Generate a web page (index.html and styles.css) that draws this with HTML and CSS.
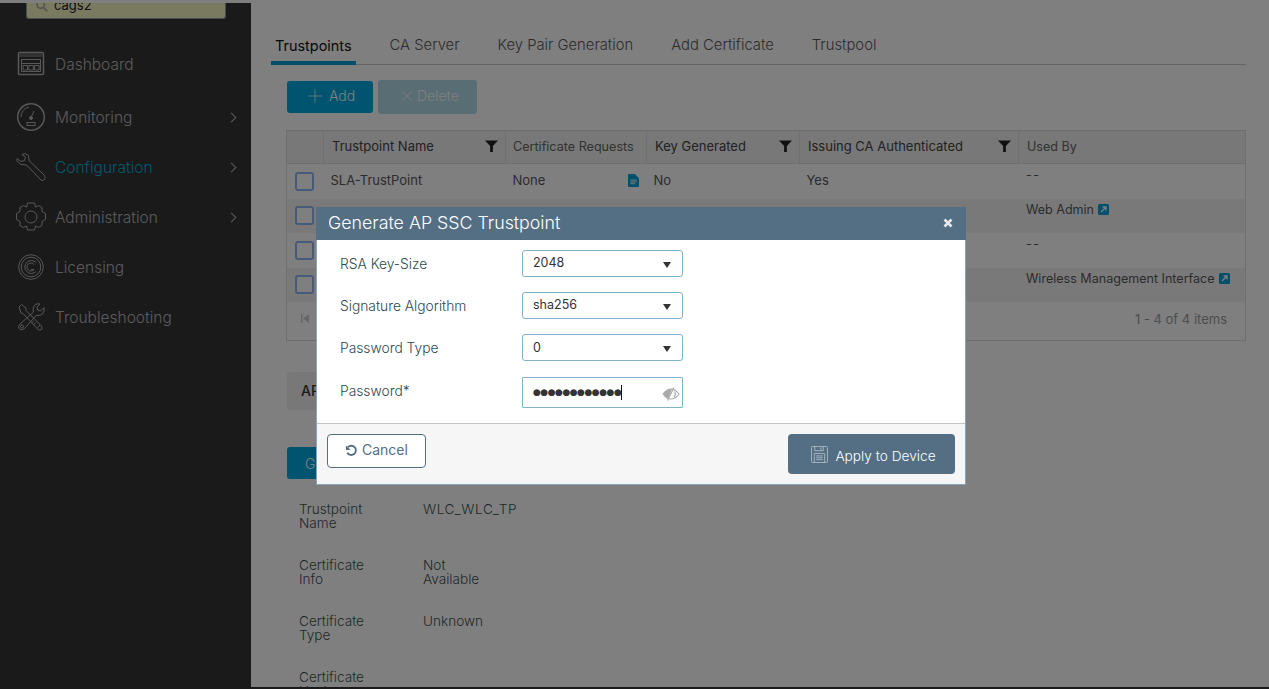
FILE: index.html
```html
<!DOCTYPE html>
<html lang="en">
<head>
  <meta charset="UTF-8" />
  <title>Trustpoints</title>
  <link rel="stylesheet" href="styles.css">
</head>
<body>
  <div class="topline"></div>
  <div class="page">
    <aside class="sidebar">
      <div class="search">
        <svg class="search-icon" viewBox="0 0 14 14"><circle cx="5.500" cy="5.500" r="4.200"/><path d="M8.500 8.500 13 13"/></svg>
        <span>cags2</span>
      </div>
      <nav class="menu">
        <a class="menu-item">
          <svg class="menu-icon" viewBox="0 0 30 30"><rect class="frame" x="2.500" y="3.500" width="25" height="22" rx="1"/><path class="band" d="M3 4h24v4H3z"/><path d="M5.500 10.500h19v4h-19zM5.500 14.500h19v8h-19zM7 16.500h4.500v4.500H7zM12.800 16.500h4.500v4.500h-4.500zM18.600 16.500h4.500v4.500h-4.500z"/></svg>
          <span>Dashboard</span>
        </a>
        <a class="menu-item has-sub">
          <svg class="menu-icon" viewBox="0 0 30 30"><circle class="frame" cx="15" cy="15" r="13.300"/><path d="M5 15A10 10 0 0 1 13 5M15 15.500 18 9"/><circle class="hub" cx="15" cy="16" r="1.500"/><rect x="11" y="20.500" width="8" height="3"/></svg>
          <span>Monitoring</span>
        </a>
        <a class="menu-item has-sub active">
          <svg class="menu-icon" viewBox="0 0 30 30"><path d="M9 1.500 12.500 3.500 13 8.500 28.500 23.500Q30 25.500 28.500 27.500 27 29.500 25 28L10.500 13 5 12.500 1 9 1 6.500 5 9.500 8.500 8.500 9.500 5 6 2.500Z"/></svg>
          <span>Configuration</span>
        </a>
        <a class="menu-item has-sub">
          <svg class="menu-icon" viewBox="0 0 30 30"><path d="M11.500 1h7l1 4 3-1.500 3.500 2 0 4 3.500 2 0 6-3.500 2 0 4-3.500 2-3-1.500-1 4h-7l-1-4-3 1.500-3.500-2 0-4-3.500-2 0-6 3.500-2 0-4 3.500-2 3 1.500z"/><circle cx="15" cy="15" r="6"/></svg>
          <span>Administration</span>
        </a>
        <a class="menu-item">
          <svg class="menu-icon" viewBox="0 0 30 30"><circle cx="15" cy="15" r="12.300"/><circle cx="15" cy="15" r="9.800"/><path d="M20 10.500A6.500 6.500 0 1 0 20 19.500M18 12.500A4 4 0 1 0 18 17.500H15"/></svg>
          <span>Licensing</span>
        </a>
        <a class="menu-item">
          <svg class="menu-icon" viewBox="0 0 30 30"><path d="M3 5 5.500 2.500 10 6 10 8.500 25 23.500Q27 26 25.500 27.500 23.500 29 21.500 27L7 11.500 5 11ZM21.500 25.500l2.500-2.500M18 18.500l-2.500 2.500M20 20.500l-2.500 2.500"/><path d="M28 5.500 24.500 9 21.500 8 21 5 24 2Q19.500 1 17.500 5 16.500 8 17.500 10L3.500 22.500Q1.500 25 3.500 27 6 29 8.500 26.500L20 13.500Q24 14 26.500 12 29 9 28 5.500Z"/><circle cx="6" cy="24.500" r="1.500"/></svg>
          <span>Troubleshooting</span>
        </a>
      </nav>
    </aside>

    <main class="content">
      <div class="tabs">
        <a class="tab active">Trustpoints</a>
        <a class="tab">CA Server</a>
        <a class="tab">Key Pair Generation</a>
        <a class="tab">Add Certificate</a>
        <a class="tab">Trustpool</a>
      </div>

      <div class="toolbar">
        <button class="btn btn-add"><svg class="btn-sign" viewBox="0 0 14 14"><path d="M7 0v14M0 7h14"/></svg>Add</button>
        <button class="btn btn-delete"><svg class="btn-sign" viewBox="0 0 14 14"><path d="M1.500 1.500l11 11M12.500 1.500l-11 11"/></svg>Delete</button>
      </div>

      <div class="grid">
        <div class="grid-row grid-head">
          <div class="cell"></div>
          <div class="cell filter">Trustpoint Name <svg class="funnel" viewBox="0 0 14 14"><path d="M0 1h14L8.500 7v6.500h-3V7z"/></svg></div>
          <div class="cell plain">Certificate Requests</div>
          <div class="cell filter">Key Generated <svg class="funnel" viewBox="0 0 14 14"><path d="M0 1h14L8.500 7v6.500h-3V7z"/></svg></div>
          <div class="cell filter">Issuing CA Authenticated <svg class="funnel" viewBox="0 0 14 14"><path d="M0 1h14L8.500 7v6.500h-3V7z"/></svg></div>
          <div class="cell plain">Used By</div>
        </div>
        <div class="grid-row">
          <div class="cell check-cell"><span class="check"></span></div>
          <div class="cell">SLA-TrustPoint</div>
          <div class="cell doc-cell">None <svg class="doc" viewBox="0 0 12 14"><path d="M0 1a1 1 0 0 1 1-1h6.500L12 4.500V13a1 1 0 0 1-1 1H1a1 1 0 0 1-1-1z"/><path class="doc-lines" d="M2.500 6.500h7M2.500 8.500h7M2.500 10.500h5"/></svg></div>
          <div class="cell">No</div>
          <div class="cell">Yes</div>
          <div class="cell top"><span class="dash">--</span></div>
        </div>
        <div class="grid-row alt">
          <div class="cell check-cell"><span class="check"></span></div>
          <div class="cell"></div>
          <div class="cell"></div>
          <div class="cell"></div>
          <div class="cell"></div>
          <div class="cell top">Web Admin <svg class="ext" viewBox="0 0 11 11"><rect width="11" height="11" rx="1.500"/><path class="ext-arrow" d="M3 8 7.500 3.500M4.500 3h3.500v3.500"/></svg></div>
        </div>
        <div class="grid-row">
          <div class="cell check-cell"><span class="check"></span></div>
          <div class="cell"></div>
          <div class="cell"></div>
          <div class="cell"></div>
          <div class="cell"></div>
          <div class="cell top"><span class="dash">--</span></div>
        </div>
        <div class="grid-row alt">
          <div class="cell check-cell"><span class="check"></span></div>
          <div class="cell"></div>
          <div class="cell"></div>
          <div class="cell"></div>
          <div class="cell"></div>
          <div class="cell top">Wireless Management Interface <svg class="ext" viewBox="0 0 11 11"><rect width="11" height="11" rx="1.500"/><path class="ext-arrow" d="M3 8 7.500 3.500M4.500 3h3.500v3.500"/></svg></div>
        </div>
        <div class="grid-foot">
          <svg class="pager-first" viewBox="0 0 8 9"><path d="M0 0h1.500v9H0zM8 0v9L2 4.500z"/></svg>
          <span class="pager-info">1 - 4 of 4 items</span>
        </div>
      </div>

      <div class="panel-title">AP</div>
      <button class="btn btn-gen">Generate</button>

      <dl class="details">
        <dt>Trustpoint Name</dt><dd class="tp-name">WLC_WLC_TP</dd>
        <dt>Certificate Info</dt><dd>Not Available</dd>
        <dt>Certificate Type</dt><dd>Unknown</dd>
        <dt>Certificate Hash</dt><dd></dd>
      </dl>
    </main>
  </div>
  <div class="bottomline"></div>

  <div class="overlay"></div>

  <div class="modal">
    <div class="modal-head">
      <span>Generate AP SSC Trustpoint</span>
      <svg class="modal-close" viewBox="0 0 10 10"><path d="M1.500 1.500l7 7M8.500 1.500l-7 7"/></svg>
    </div>
    <div class="modal-body">
      <div class="form-row">
        <label>RSA Key-Size</label>
        <div class="select">2048<i class="caret"></i></div>
      </div>
      <div class="form-row">
        <label>Signature Algorithm</label>
        <div class="select">sha256<i class="caret"></i></div>
      </div>
      <div class="form-row">
        <label>Password Type</label>
        <div class="select">0<i class="caret"></i></div>
      </div>
      <div class="form-row">
        <label>Password*</label>
        <div class="select password">
          <span class="dots">●●●●●●●●●●●●</span><i class="cursor"></i>
          <svg class="eye" viewBox="0 0 18 14"><path d="M1 7C4 3 7 2 9 2S14 3 17 7C14 11 11 12 9 12S4 11 1 7Z"/><path d="M5.500 13.500 12 .5M12.500 4.500Q14.500 7 12 10"/><path class="eye-fill" d="M1 7C4 3 7 2 10 2L6.500 11.500C4.500 11 3 9.500 1 7Z"/></svg>
        </div>
      </div>
    </div>
    <div class="modal-foot">
      <button class="btn-cancel">
        <svg class="undo" viewBox="0 0 14 14"><path d="M3 3.500A5 5 0 1 1 2.500 9.500"/><path class="undo-fill" d="M1 1.500v5h5z"/></svg>
        Cancel
      </button>
      <button class="btn-apply">
        <svg class="save" viewBox="0 0 18 18"><path d="M.5 1.500a1 1 0 0 1 1-1h15a1 1 0 0 1 1 1v15a1 1 0 0 1-1 1h-15a1 1 0 0 1-1-1zM4 .5V5h9V.5M10.500 1.500v2.500M3.500 17.500V8h11v9.500M5.500 10.500h7M5.500 12.500h7M5.500 14.500h7"/></svg>
        Apply to Device
      </button>
    </div>
  </div>
</body>
</html>
```

FILE: styles.css
```css
* {
  box-sizing: border-box;
}

html, body {
  height: 100%;
}

body {
  margin: 0;
  height: 689px;
  overflow: hidden;
  display: flex;
  flex-direction: column;
  font-family: Inter, "Liberation Sans", sans-serif;
  font-weight: 300;
  color: #3a4a4f;
  background: #fff;
}

.topline {
  height: 3px;
  background: #fff;
}

.bottomline {
  height: 2px;
  background: #343434;
}

.page {
  flex: 1;
  display: flex;
  min-height: 0;
  border-left: 1px solid #343434;
}

/* sidebar */
.sidebar {
  width: 250px;
  background: #343434;
  flex-shrink: 0;
}

.search {
  width: 200px;
  height: 16px;
  margin-left: 25px;
  padding: 0 0 7px 9px;
  display: flex;
  align-items: flex-end;
  gap: 6px;
  background: #f4f4c0;
  border: 1px solid #8e9aa3;
  border-top: none;
  border-radius: 0 0 3px 3px;
  font-size: 13px;
  font-weight: 400;
  color: #222;
  line-height: 12px;
  overflow: hidden;
}

.search-icon {
  width: 12px;
  height: 12px;
  margin-bottom: -1px;
  fill: none;
  stroke: #aaa;
  stroke-width: 2;
}

.menu {
  margin-top: 20px;
  display: flex;
  flex-direction: column;
}

.menu-item {
  position: relative;
  height: 50px;
  display: flex;
  align-items: center;
  font-size: 15.500px;
  font-weight: 300;
  color: #b4b4b4;
}

.menu-item:first-child {
  margin-bottom: 3px;
}

.menu-item span {
  position: absolute;
  left: 54px;
}

.menu-icon {
  width: 30px;
  height: 30px;
  margin-left: 15px;
  fill: none;
  stroke: #b0b0b0;
  stroke-width: 1;
}

.frame {
  stroke-width: 1.500;
}

.band {
  fill: #666;
  stroke: none;
}

.hub {
  fill: #b0b0b0;
}

.menu-item.active {
  color: #05b0d8;
}

.menu-item.has-sub::after {
  content: "";
  position: absolute;
  right: 16px;
  width: 6px;
  height: 6px;
  border-top: 1.500px solid #b8b8b8;
  border-right: 1.500px solid #b8b8b8;
  transform: rotate(45deg);
}

/* main area */
.content {
  flex: 1;
  min-width: 0;
  padding: 30px 23px 0 20px;
  background: #fff;
  overflow: hidden;
}

.tabs {
  display: flex;
  gap: 38px;
  height: 32px;
  padding-left: 4px;
  border-bottom: 1px solid #c8c8c8;
  font-size: 14.800px;
  line-height: 25px;
  color: #58585b;
  font-weight: 300;
}

.tab {
  position: relative;
}

.tab.active {
  color: #111;
  font-size: 14.450px;
  font-weight: 400;
}

.tab.active::after {
  content: "";
  position: absolute;
  left: -4px;
  right: -4px;
  bottom: -1px;
  height: 4px;
  background: #049fd9;
}

.toolbar {
  display: flex;
  gap: 5px;
  align-items: center;
  margin: 15px 0 0 16px;
  height: 34px;
}

.btn {
  height: 32px;
  border: none;
  border-radius: 3px;
  font: inherit;
  font-size: 14px;
  color: #fff;
}

.btn-add,
.btn-delete {
  display: flex;
  align-items: center;
  padding: 0 0 3px 21px;
}

.btn-add {
  width: 86px;
  background: #00a8e0;
  gap: 7px;
}

.btn-delete {
  width: 99px;
  height: 34px;
  padding-left: 23px;
  gap: 4px;
  background: #b3dbe8;
}

.btn-sign {
  width: 14px;
  height: 14px;
  fill: none;
  stroke: #c4e6f2;
  stroke-width: 1;
  flex-shrink: 0;
}

.btn-delete .btn-sign {
  width: 12px;
  height: 12px;
  stroke: #fff;
}

.grid {
  margin: 16px 0 0 15px;
  width: 960px;
  border: 1px solid #dfdfdf;
  font-size: 13px;
  font-weight: 400;
  color: #58585b;
}

.grid-row {
  display: grid;
  grid-template-columns: 37px 182px 141px 153px 219px 1fr;
  height: 34.500px;
}

.grid-head {
  height: 33px;
  background: #f0f0f0;
  border-bottom: 1px solid #dfdfdf;
}

.grid-head .cell {
  border-right: 1px solid #dfdfdf;
  color: #444;
  padding: 0 0 3px 8px;
  justify-content: space-between;
}

.grid-head .cell:last-child {
  border-right: none;
}

.grid-head .plain {
  color: #666;
  padding: 0 0 1px 7px;
  font-size: 12.600px;
}

.grid-head .plain:last-child {
  padding-left: 8px;
}

.cell {
  display: flex;
  align-items: center;
  padding: 0 0 2px 6.500px;
  white-space: nowrap;
  min-width: 0;
}

.check-cell {
  padding: 0 0 0 7px;
}

.cell.top {
  align-items: flex-start;
  padding: 3px 0 0 7px;
  gap: 4px;
  font-size: 12.550px;
}

.dash {
  letter-spacing: 1.500px;
}

.alt {
  background: #f3f3f3;
}

.funnel {
  width: 13px;
  height: 14px;
  margin-right: 7px;
  fill: #222;
  flex-shrink: 0;
}

.check {
  width: 19px;
  height: 19px;
  border: 2px solid #8fb4f0;
  border-radius: 3px;
  background: #fff;
  margin-left: 1px;
}

.doc-cell {
  justify-content: space-between;
}

.doc {
  width: 11px;
  height: 13px;
  margin-right: 8px;
  fill: #049fd9;
}

.doc-lines {
  fill: none;
  stroke: #fff;
}

.ext {
  width: 11px;
  height: 11px;
  margin-top: 2px;
  fill: #049fd9;
  flex-shrink: 0;
}

.ext-arrow {
  fill: none;
  stroke: #fff;
  stroke-width: 1.300;
}

.grid-foot {
  height: 38px;
  display: flex;
  justify-content: space-between;
  align-items: center;
  padding: 0 18px 5px 14px;
  color: #9a9a9a;
}

.pager-first {
  width: 8px;
  height: 9px;
  fill: #ccc;
}

.panel-title {
  width: 300px;
  height: 38px;
  margin: 31px 0 0 16px;
  padding-left: 14px;
  background: #f0f0f0;
  border-radius: 3px;
  font-size: 14px;
  font-weight: 500;
  line-height: 38px;
  color: #333;
}

.btn-gen {
  display: block;
  width: 120px;
  margin: 37px 0 0 16px;
  padding-left: 18px;
  text-align: left;
  background: #00a8e0;
}

.details {
  display: grid;
  grid-template-columns: 124px 72px;
  grid-auto-rows: 56px;
  margin: 23px 0 0 28px;
  font-size: 13.600px;
  line-height: 14px;
  color: #3e5358;
}

.details dt {
  padding-right: 40px;
}

.details dd {
  margin: 0;
}

.details .tp-name {
  letter-spacing: 0.600px;
}

/* modal */
.overlay {
  position: fixed;
  inset: 0;
  background: rgba(0, 0, 0, 0.5);
}

.modal {
  position: fixed;
  left: 316px;
  top: 207px;
  width: 650px;
  height: 278px;
  display: flex;
  flex-direction: column;
  background: #fff;
  border: 1px solid #8aa3b8;
  border-top: none;
}

.modal-head {
  height: 33px;
  margin: 0 -1px;
  padding: 0 13px 2px 12px;
  display: flex;
  align-items: center;
  justify-content: space-between;
  background: #546e84;
  color: #fff;
  font-size: 17.800px;
  font-weight: 300;
}

.modal-close {
  width: 10px;
  height: 10px;
  fill: none;
  stroke: #e8e8e8;
  stroke-width: 2.600;
}

.modal-body {
  flex: 1;
  padding: 10px 0 0 23px;
  font-size: 13.800px;
  font-weight: 300;
  color: #2c4a53;
}

.form-row {
  display: flex;
  height: 42px;
}

.form-row label {
  width: 182px;
  line-height: 29px;
}

.form-row:last-child label {
  line-height: 31px;
}

.select {
  position: relative;
  width: 161px;
  height: 27px;
  padding-left: 10px;
  border: 1px solid #83b1c9;
  border-radius: 3px;
  font-size: 12.500px;
  font-weight: 400;
  line-height: 23px;
  color: #333;
}

.form-row:nth-child(3) .select {
  line-height: 25px;
}

.caret {
  position: absolute;
  right: 11px;
  top: 11px;
  width: 0;
  height: 0;
  border-left: 4px solid transparent;
  border-right: 4px solid transparent;
  border-top: 6px solid #333;
}

.password {
  height: 31px;
  margin-top: 1px;
  border-radius: 1px;
  display: flex;
  align-items: center;
}

.dots {
  font-size: 9px;
  font-family: "DejaVu Sans", sans-serif;
  letter-spacing: -0.500px;
  color: #333;
}

.cursor {
  width: 1px;
  height: 15px;
  background: #111;
}

.eye {
  position: absolute;
  right: 2px;
  top: 9px;
  width: 18px;
  height: 14px;
  fill: none;
  stroke: #aaa;
  stroke-width: 1.200;
}

.eye-fill {
  fill: #aaa;
  stroke: none;
}

.modal-foot {
  height: 61px;
  display: flex;
  justify-content: space-between;
  padding: 10px 10px 0 10px;
  background: #f6f6f6;
  border-top: 1px solid #c4c4c4;
}

.btn-cancel {
  width: 99px;
  height: 34px;
  padding: 0 0 3px;
  border: 1px solid #546e84;
  border-radius: 4px;
  background: #fff;
  color: #546e84;
  font: inherit;
  font-size: 14px;
  font-weight: 400;
}

.undo {
  width: 13px;
  height: 13px;
  vertical-align: -2px;
  fill: none;
  stroke: #546e84;
  stroke-width: 2;
}

.undo-fill {
  fill: #546e84;
  stroke: none;
}

.btn-apply {
  width: 167px;
  height: 40px;
  display: flex;
  align-items: center;
  justify-content: center;
  gap: 7px;
  padding: 3px 0 0 4px;
  border: none;
  border-radius: 4px;
  background: #546e84;
  color: #fff;
  font: inherit;
  font-size: 13.700px;
}

.save {
  width: 17px;
  height: 17px;
  margin-top: -3px;
  fill: none;
  stroke: #aab8c4;
  stroke-width: 1;
}
```
